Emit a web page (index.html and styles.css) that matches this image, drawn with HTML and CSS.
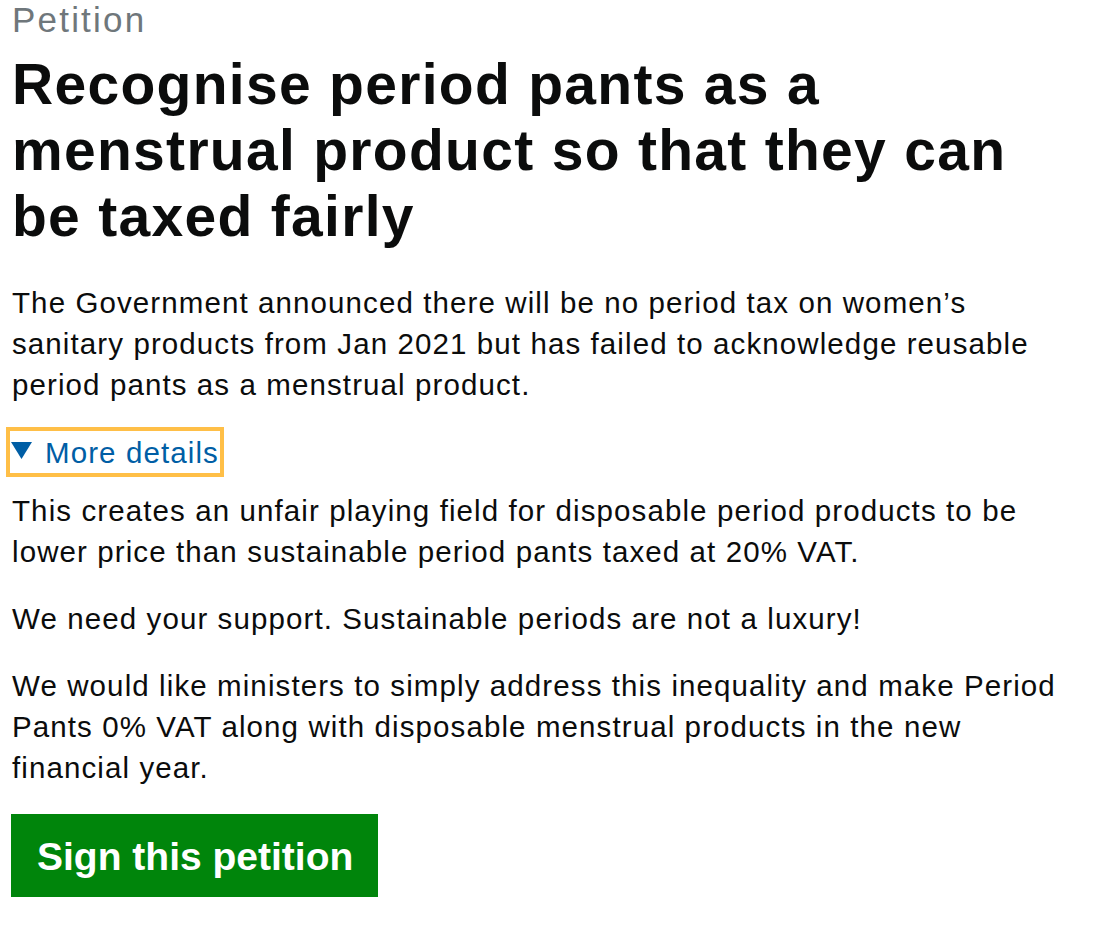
FILE: index.html
```html
<!DOCTYPE html>
<html lang="en">
<head>
<meta charset="utf-8">
<title>Recognise period pants as a menstrual product so that they can be taxed fairly</title>
<link rel="stylesheet" href="styles.css">
</head>
<body>
<main class="page">
  <h1 class="heading">
    <span class="caption">Petition</span>
    <span class="title">Recognise period pants as a menstrual product so that they can be taxed fairly</span>
  </h1>
  <p class="text lead">The Government announced there will be no period tax on women’s sanitary products from Jan 2021 but has failed to acknowledge reusable period pants as a menstrual product.</p>
  <details class="details" open>
    <summary class="summary"><svg class="arrow" width="21" height="17" viewBox="0 0 21 17" aria-hidden="true"><path d="M0 0 L21 0 L10.5 17 Z" fill="#005ea5"/></svg><span class="summary-text">More details</span></summary>
    <div class="details-body">
      <p class="text">This creates an unfair playing field for disposable period products to be lower price than sustainable period pants taxed at 20% VAT.</p>
      <p class="text">We need your support. Sustainable periods are not a luxury!</p>
      <p class="text">We would like ministers to simply address this inequality and make Period Pants 0% VAT along with disposable menstrual products in the new financial year.</p>
    </div>
  </details>
  <a class="button" href="#">Sign this petition</a>
</main>
</body>
</html>
```
FILE: styles.css
```css
html, body {
  margin: 0;
  padding: 0;
  background: #ffffff;
}
body {
  font-family: "Liberation Sans", Arial, Helvetica, sans-serif;
  color: #0b0c0c;
}
.page {
  padding: 0 0 0 12px;
  display: flex;
  flex-direction: column;
  align-items: flex-start;
}
.heading {
  margin: 0;
  font-weight: 700;
}
.caption {
  display: block;
  font-size: 35px;
  line-height: 40px;
  font-weight: 400;
  letter-spacing: 2.2px;
  color: #6f777b;
  margin-bottom: 11px;
}
.title {
  display: block;
  font-size: 57px;
  line-height: 66px;
  letter-spacing: 1.3px;
  max-width: 1040px;
}
.text {
  font-size: 29.5px;
  line-height: 41px;
  letter-spacing: 1.1px;
  margin: 0 0 26px 0;
  max-width: 1065px;
}
.lead {
  margin-top: 33px;
  margin-bottom: 26px;
}
.details {
  margin: 0;
}
.summary {
  display: flex;
  width: max-content;
  align-items: flex-start;
  list-style: none;
  cursor: pointer;
  color: #005ea5;
  font-size: 29.5px;
  line-height: 41px;
  letter-spacing: 1.1px;
  padding: 1px 1px 0 1px;
  margin-left: -2px;
  outline: 4px solid #ffbf47;
}
.summary::-webkit-details-marker {
  display: none;
}
.arrow {
  display: block;
  flex: none;
  margin-top: 10px;
  margin-right: 13px;
}
.details-body {
  padding-top: 17px;
}
.button {
  display: block;
  margin-left: -1px;
  background: #00850b;
  color: #ffffff;
  font-weight: 700;
  font-size: 39px;
  line-height: 81px;
  letter-spacing: 0;
  padding: 2px 25px 0 26px;
  text-decoration: none;
  box-shadow: 0 3px 0 #003a06;
}
```
